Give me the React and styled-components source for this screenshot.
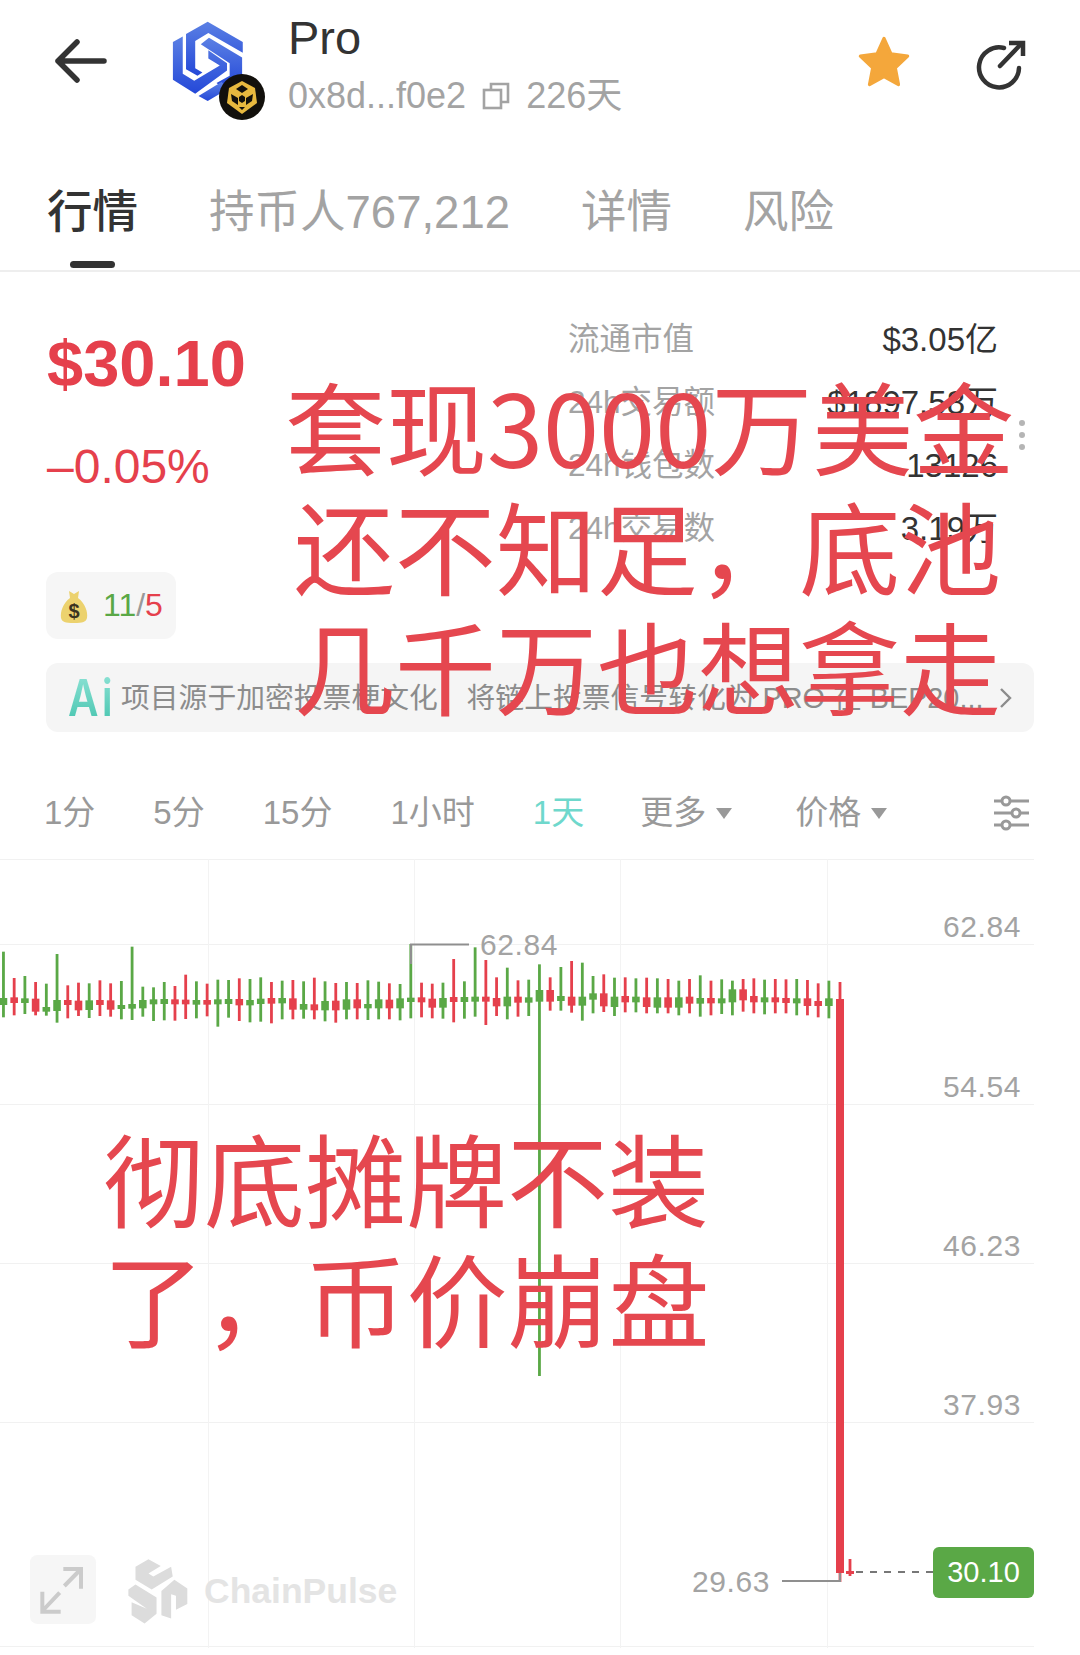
import React from "react";
import styled, { createGlobalStyle } from "styled-components";

const FONT = `"Liberation Sans", "Noto Sans CJK SC", sans-serif`;
const RED = "#e5404c";
const GREEN = "#5aa846";
const GREY = "#a3a3a3";
const DARK = "#333333";

const GlobalStyle = createGlobalStyle`
  html, body {
    margin: 0;
    padding: 0;
    background: #ffffff;
    font-family: ${FONT};
  }
`;

const Page = styled.div`
  position: relative;
  width: 1080px;
  height: 1655px;
  overflow: hidden;
  background: #fff;
`;

/* header */
const Header = styled.header`
  display: flex;
  align-items: flex-start;
  height: 160px;
  box-sizing: border-box;
  padding: 16px 54px 0 52px;
`;

const BackIcon = styled.svg`
  width: 58px;
  height: 50px;
  margin-top: 20px;
  flex: none;
`;

const TokenLogo = styled.div`
  position: relative;
  width: 80px;
  height: 96px;
  margin: 4px 38px 0 60px;
  flex: none;
`;

const TokenMark = styled.svg`
  display: block;
  width: 76px;
  height: 82px;
`;

const ChainBadge = styled.svg`
  position: absolute;
  left: 49px;
  top: 54px;
  width: 46px;
  height: 46px;
`;

const Identity = styled.div`
  display: flex;
  flex-direction: column;
  gap: 16px;
`;

const TokenName = styled.div`
  font-size: 47px;
  line-height: 44px;
  color: ${DARK};
`;

const TokenMeta = styled.div`
  display: flex;
  align-items: center;
  gap: 16px;
  font-size: 36px;
  line-height: 40px;
  color: ${GREY};
`;

const CopyIcon = styled.svg`
  width: 28px;
  height: 28px;
`;

const HeaderActions = styled.div`
  display: flex;
  align-items: center;
  gap: 63px;
  margin-left: auto;
  margin-top: 16px;
`;

const StarIcon = styled.svg`
  width: 58px;
  height: 58px;
`;

const ShareIcon = styled.svg`
  width: 50px;
  height: 52px;
  margin-top: 7px;
`;

/* tabs */
const Tabs = styled.nav`
  display: flex;
  gap: 71px;
  height: 112px;
  box-sizing: border-box;
  padding: 26px 0 0 47px;
  border-bottom: 2px solid #eeeeee;
`;

const Tab = styled.div`
  position: relative;
  font-size: 45.5px;
  line-height: 54px;
  font-weight: ${(p) => (p.$active ? 500 : 400)};
  color: ${(p) => (p.$active ? DARK : GREY)};

  ${(p) =>
    p.$active &&
    `
    &::after {
      content: "";
      position: absolute;
      left: 23px;
      top: 75px;
      width: 45px;
      height: 7px;
      border-radius: 4px;
      background: ${DARK};
    }
  `}
`;

/* price summary */
const Summary = styled.section`
  display: flex;
  padding-left: 47px;
`;

const PriceColumn = styled.div`
  display: flex;
  flex-direction: column;
  align-items: flex-start;
  width: 521px;
  flex: none;
`;

const Price = styled.div`
  margin-top: 57px;
  font-size: 65px;
  line-height: 70px;
  font-weight: 700;
  color: ${RED};
`;

const Change = styled.div`
  margin-top: 43px;
  font-size: 48px;
  line-height: 50px;
  color: ${RED};
`;

const Pill = styled.div`
  display: flex;
  align-items: center;
  gap: 14px;
  box-sizing: border-box;
  width: 130px;
  height: 67px;
  margin-top: 80px;
  margin-left: -1px;
  padding-left: 13px;
  border-radius: 12px;
  background: #f6f6f6;
  font-size: 32px;
`;

const BagIcon = styled.svg`
  width: 30px;
  height: 36px;
`;

const Count = styled.span`
  color: ${(p) => p.$color};
`;

const Stats = styled.div`
  display: flex;
  flex-direction: column;
  width: 430px;
  padding-top: 36px;
`;

const StatRow = styled.div`
  display: flex;
  justify-content: space-between;
  height: 63px;
  line-height: 63px;
  font-size: 31.5px;
  color: ${GREY};
`;

const StatValue = styled.span`
  font-size: 33px;
  color: ${DARK};
`;

const MoreDots = styled.div`
  position: absolute;
  left: 1019px;
  top: 420px;
  display: flex;
  flex-direction: column;
  gap: 6px;

  i {
    width: 6px;
    height: 6px;
    border-radius: 50%;
    background: #b5b5b5;
  }
`;

const AiBanner = styled.div`
  display: flex;
  align-items: center;
  box-sizing: border-box;
  height: 69px;
  margin: 24px 46px 0;
  padding: 0 20px 0 22px;
  border-radius: 12px;
  background: #f5f5f5;
`;

const AiMark = styled.div`
  position: relative;
  width: 53px;
  flex: none;
  font-family: Inter, "Liberation Sans", sans-serif;
  font-size: 42px;
  line-height: 44px;
  font-weight: 600;
  letter-spacing: 3px;
  transform: scaleY(1.2);
  transform-origin: left center;
  background: linear-gradient(180deg, #8fe3d6, #46c4ae);
  -webkit-background-clip: text;
  background-clip: text;
  color: transparent;
`;

const AiText = styled.div`
  flex: 1;
  font-size: 28.8px;
  line-height: 40px;
  color: #8c8c8c;
  white-space: nowrap;
  overflow: hidden;
`;

const Chevron = styled.svg`
  width: 16px;
  height: 24px;
  flex: none;
`;

/* interval selector */
const Intervals = styled.div`
  display: flex;
  align-items: flex-start;
  gap: 58px;
  height: 127px;
  box-sizing: border-box;
  padding: 63px 51px 0 44px;
  font-size: 33px;
  line-height: 36px;
  color: #999999;
`;

const Interval = styled.div`
  display: flex;
  align-items: center;
  gap: 10px;
  margin-left: ${(p) => p.$nudge || 0}px;
  color: ${(p) => (p.$active ? "#6fd8cc" : "#999999")};
`;

const Caret = styled.i`
  width: 0;
  height: 0;
  border-left: 8px solid transparent;
  border-right: 8px solid transparent;
  border-top: 11px solid #999999;
`;

const SettingsIcon = styled.svg`
  width: 36px;
  height: 36px;
  margin-left: auto;
`;

/* chart */
const Chart = styled.div`
  position: relative;
  height: 796px;
`;

const ChartCanvas = styled.svg`
  display: block;
  width: 1080px;
  height: 796px;
`;

const AxisLabel = styled.text`
  font-family: ${FONT};
  font-size: 30px;
  letter-spacing: 0.6px;
  fill: ${GREY};
`;

const PriceTag = styled.div`
  position: absolute;
  left: 933px;
  top: 688px;
  width: 101px;
  height: 51px;
  border-radius: 6px;
  background: ${GREEN};
  color: #fff;
  font-size: 29px;
  line-height: 51px;
  text-align: center;
`;

const ExpandButton = styled.svg`
  position: absolute;
  left: 29px;
  top: 696px;
  width: 68px;
  height: 69px;
`;

const Watermark = styled.div`
  position: absolute;
  left: 126px;
  top: 698px;
  display: flex;
  align-items: center;
  gap: 14px;
  font-size: 35.5px;
  font-weight: 700;
  color: #e4e4e4;
`;

const WatermarkLogo = styled.svg`
  width: 64px;
  height: 68px;
`;

/* caption painted over the screenshot */
const Caption = styled.div`
  position: absolute;
  left: ${(p) => p.$left}px;
  top: ${(p) => p.$top}px;
  width: ${(p) => p.$width}px;
  font-family: "Noto Sans CJK SC", sans-serif;
  font-size: 101px;
  line-height: 120px;
  word-spacing: -22px;
  color: #e5474f;
  text-align: ${(p) => p.$align};
  white-space: nowrap;
`;

// [top, bottom, bodyTop, bodyBottom] traced from a 3x crop, y = 770 + v / 3
const g = "g";
const r = "r";
const candles = [
  [g, 545, 742, 684, 702], [r, 624, 736, 682, 696], [g, 618, 732, 685, 696], [r, 636, 736, 686, 722],
  [g, 641, 737, 711, 722], [g, 552, 758, 690, 720], [r, 646, 745, 690, 702], [r, 638, 738, 692, 718],
  [g, 640, 744, 691, 717], [r, 631, 738, 690, 702], [r, 640, 740, 691, 716], [g, 633, 748, 705, 714],
  [g, 530, 750, 702, 713], [g, 650, 740, 690, 712], [g, 652, 753, 688, 700], [g, 636, 751, 687, 699],
  [r, 648, 752, 688, 700], [r, 614, 747, 689, 700], [g, 634, 745, 690, 701], [r, 641, 739, 690, 701],
  [g, 629, 770, 688, 700], [g, 630, 743, 687, 699], [r, 625, 753, 687, 703], [g, 627, 757, 690, 703],
  [g, 622, 755, 686, 699], [r, 636, 760, 684, 698], [g, 632, 748, 684, 697], [r, 630, 748, 685, 716],
  [g, 634, 746, 702, 716], [r, 623, 748, 703, 718], [g, 634, 754, 693, 718], [r, 639, 758, 692, 718],
  [g, 636, 748, 688, 716], [r, 639, 748, 688, 712], [g, 631, 750, 702, 712], [g, 635, 748, 688, 712],
  [r, 640, 748, 689, 712], [g, 642, 751, 685, 712], [g, 522, 745, 683, 693], [r, 638, 742, 682, 694],
  [r, 641, 745, 686, 710], [g, 638, 746, 684, 710], [r, 567, 757, 681, 693], [g, 634, 746, 681, 693],
  [g, 532, 740, 680, 692], [r, 570, 765, 680, 692], [r, 622, 738, 684, 706], [g, 593, 748, 680, 706],
  [r, 631, 740, 680, 695], [g, 629, 738, 682, 695], [g, 583, 1818, 660, 692], [r, 622, 722, 660, 692],
  [g, 591, 722, 678, 690], [r, 573, 728, 680, 704], [g, 578, 752, 680, 704], [g, 618, 730, 670, 686],
  [r, 613, 726, 670, 706], [g, 623, 738, 680, 708], [r, 622, 727, 678, 694], [g, 625, 727, 680, 694],
  [r, 623, 730, 682, 708], [g, 625, 730, 682, 710], [r, 627, 730, 682, 710], [g, 632, 736, 682, 710],
  [r, 627, 730, 680, 698], [g, 616, 740, 684, 698], [r, 632, 736, 684, 697], [g, 628, 732, 685, 697],
  [g, 632, 736, 658, 694], [r, 627, 725, 658, 688], [r, 625, 730, 678, 694], [g, 629, 733, 682, 694],
  [r, 627, 730, 682, 694], [r, 628, 730, 684, 696], [g, 627, 736, 685, 697], [r, 630, 736, 685, 705],
  [r, 640, 742, 693, 705], [g, 632, 745, 685, 705],
];

const candleX = (i) => 3.45 + 10.72 * i;
const toY = (v) => 770 + v / 3;

const Candles = () =>
  candles.map(([c, top, bottom, bodyTop, bodyBottom], i) => {
    const color = c === g ? GREEN : RED;
    const x = candleX(i);
    return (
      <g key={i} fill={color}>
        <rect x={x - 1.4} y={toY(top)} width={2.8} height={(bottom - top) / 3} />
        <rect x={x - 3.8} y={toY(bodyTop)} width={7.6} height={(bodyBottom - bodyTop) / 3 + 1} />
      </g>
    );
  });

const hLines = [944, 1104, 1263, 1422, 1646];
const vLines = [208, 414, 620, 827];
const axis = [
  ["62.84", 937],
  ["54.54", 1097],
  ["46.23", 1256],
  ["37.93", 1415],
];

export default function App() {
  return (
    <Page>
      <GlobalStyle />
      <Header>
        <BackIcon viewBox="0 0 58 50" fill="none" stroke={DARK} strokeWidth="5.5" strokeLinecap="round" strokeLinejoin="round">
          <path d="M6 25H52M25 6L6 25L25 44" />
        </BackIcon>
        <TokenLogo>
          <TokenMark viewBox="90 58 228 250">
            <defs>
              <linearGradient id="tokenBlue" x1="0" y1="0" x2="0" y2="1">
                <stop offset="0" stopColor="#5b80e4" />
                <stop offset="1" stopColor="#2448d8" />
              </linearGradient>
            </defs>
            <g fill="url(#tokenBlue)">
              <path d="M137 101L203 63L310 125V158L205 98L165 122V205L187 218L172 228L137 208Z" />
              <path d="M182 132L207 112L308 172V232L250 266L230 250L270 228V190Z" />
              <path d="M97 125L127 108V222L162 243L240 197L205 175V150L262 190V212L165 283L97 240Z" />
              <path d="M175 290L245 247L270 265L203 305Z" />
            </g>
          </TokenMark>
          <ChainBadge viewBox="0 0 46 46">
            <circle cx="23" cy="23" r="23" fill="#12100c" />
            <path d="M23 7L36 14L38 29L23 40L8 29L10 14Z" fill="#e8b93f" />
            <path d="M23 11L29 15L23 19L17 15ZM12 20L19 24V31L13 27ZM34 20L27 24V31L33 27ZM20 33H26L23 36Z" fill="#12100c" />
            <path d="M23 21L26 23V27L23 29L20 27V23Z" fill="#12100c" />
          </ChainBadge>
        </TokenLogo>
        <Identity>
          <TokenName>Pro</TokenName>
          <TokenMeta>
            <span>0x8d...f0e2</span>
            <CopyIcon viewBox="0 0 28 28" fill="none" stroke={GREY} strokeWidth="2.6">
              <rect x="2" y="8" width="17" height="18" />
              <path d="M9 8V2H26V20H19" />
            </CopyIcon>
            <span>226天</span>
          </TokenMeta>
        </Identity>
        <HeaderActions>
          <StarIcon viewBox="0 0 54 54">
            <path
              d="M27 5L33.5 19.5L49 21.5L37.5 32.5L40.5 48L27 40.5L13.5 48L16.5 32.5L5 21.5L20.500 19.5Z"
              fill="#f4a73b"
              stroke="#f4a73b"
              strokeWidth="3"
              strokeLinejoin="round"
            />
          </StarIcon>
          <ShareIcon viewBox="0 0 50 52" fill="none" stroke={DARK} strokeWidth="4.5" strokeLinecap="round">
            <path d="M28 9A20 20 0 1 0 43 29" />
            <path d="M24 27L45 5" />
            <path d="M33 4H47V17" strokeLinecap="butt" />
          </ShareIcon>
        </HeaderActions>
      </Header>

      <Tabs>
        <Tab $active>行情</Tab>
        <Tab>持币人767,212</Tab>
        <Tab>详情</Tab>
        <Tab>风险</Tab>
      </Tabs>

      <Summary>
        <PriceColumn>
          <Price>$30.10</Price>
          <Change>–0.05%</Change>
          <Pill>
            <BagIcon viewBox="0 0 30 36">
              <path d="M10 3L15 6L20 3L19 10C26 15 29 24 28 30C27 34 24 35 15 35C6 35 3 34 2 30C1 24 4 15 11 10Z" fill="#ecd26e" />
              <text x="15" y="30" textAnchor="middle" fontSize="20" fontWeight="700" fill="#3a3320" fontFamily="Liberation Sans">$</text>
            </BagIcon>
            <span>
              <Count $color={GREEN}>11</Count>
              <Count $color="#999">/</Count>
              <Count $color={RED}>5</Count>
            </span>
          </Pill>
        </PriceColumn>
        <Stats>
          <StatRow><span>流通市值</span><StatValue>$3.05亿</StatValue></StatRow>
          <StatRow><span>24h交易额</span><StatValue>$1897.58万</StatValue></StatRow>
          <StatRow><span>24h钱包数</span><StatValue>13126</StatValue></StatRow>
          <StatRow><span>24h交易数</span><StatValue>3.19万</StatValue></StatRow>
        </Stats>
      </Summary>
      <MoreDots><i /><i /><i /></MoreDots>

      <AiBanner>
        <AiMark>Ai</AiMark>
        <AiText>项目源于加密投票梗文化，将链上投票信号转化为 PRO 在 BEP20...</AiText>
        <Chevron viewBox="0 0 16 24" fill="none" stroke="#8c8c8c" strokeWidth="2.4">
          <path d="M3 3L12 12L3 21" />
        </Chevron>
      </AiBanner>

      <Intervals>
        <Interval>1分</Interval>
        <Interval>5分</Interval>
        <Interval>15分</Interval>
        <Interval>1小时</Interval>
        <Interval $active>1天</Interval>
        <Interval $nudge={-2}>更多<Caret /></Interval>
        <Interval $nudge={5}>价格<Caret /></Interval>
        <SettingsIcon viewBox="0 0 36 36" fill="#fff" stroke="#999" strokeWidth="3">
          <path d="M1 6H36M1 18H36M1 30H36" />
          <circle cx="13" cy="6" r="4" />
          <circle cx="23" cy="18" r="4" />
          <circle cx="13" cy="30" r="4" />
        </SettingsIcon>
      </Intervals>

      <Chart>
        <ChartCanvas viewBox="0 859 1080 796">
          <path d="M0 859.500H1034" stroke="#f1f1f1" />
          {hLines.map((y) => (
            <path key={y} d={`M0 ${y}.5H1034`} stroke="#f1f1f1" />
          ))}
          {vLines.map((x) => (
            <path key={x} d={`M${x}.5 859V1648`} stroke="#f3f3f3" />
          ))}
          {axis.map(([label, y]) => (
            <AxisLabel key={label} x="1021" y={y} textAnchor="end">{label}</AxisLabel>
          ))}

          <Candles />

          {/* last candle, the drop */}
          <rect x="836" y="999" width="8" height="574" fill={RED} />
          <rect x="838.600" y="982" width="2.800" height="600" fill={RED} />
          <rect x="848.600" y="1559" width="2.800" height="17" fill={RED} />
          <rect x="846" y="1571" width="8" height="3" fill={RED} />
          <path d="M856 1572H933" stroke="#777" strokeWidth="2" strokeDasharray="7 7" />

          {/* high and low markers */}
          <path d="M411 964V944.500H469" fill="none" stroke="#8f8f8f" strokeWidth="2" />
          <AxisLabel x="480" y="955">62.84</AxisLabel>
          <path d="M782 1581H840V1573" fill="none" stroke="#8f8f8f" strokeWidth="2" />
          <AxisLabel x="692" y="1592">29.63</AxisLabel>
        </ChartCanvas>

        <ExpandButton viewBox="85 165 198 207">
          <rect x="85" y="165" width="198" height="207" rx="22" fill="#f6f6f6" />
          <path d="M188 258L238 207M185 207H238V266M174 278L122 333M122 275V335H177" fill="none" stroke="#cbcbcb" strokeWidth="12" />
        </ExpandButton>

        <Watermark>
          <WatermarkLogo viewBox="362 165 195 210" fill="#dcdcdc">
            <path d="M390 195L430 172L468 193L430 216L445 225L500 195L505 225L440 265L390 235Z" />
            <path d="M368 265L390 250L455 290V340L418 370L378 345V305L425 325L368 285Z" />
            <path d="M470 270L510 235L550 262V310L515 328V285L500 280V355L470 345Z" />
          </WatermarkLogo>
          ChainPulse
        </Watermark>

        <PriceTag>30.10</PriceTag>
      </Chart>

      <Caption $left={285} $top={364} $width={725} $align="center">
        <div>套现3000万美金</div>
        <div>还不知足， 底池</div>
        <div>几千万也想拿走</div>
      </Caption>
      <Caption $left={103} $top={1116} $width={620} $align="left">
        <div>彻底摊牌不装</div>
        <div>了， 币价崩盘</div>
      </Caption>
    </Page>
  );
}
